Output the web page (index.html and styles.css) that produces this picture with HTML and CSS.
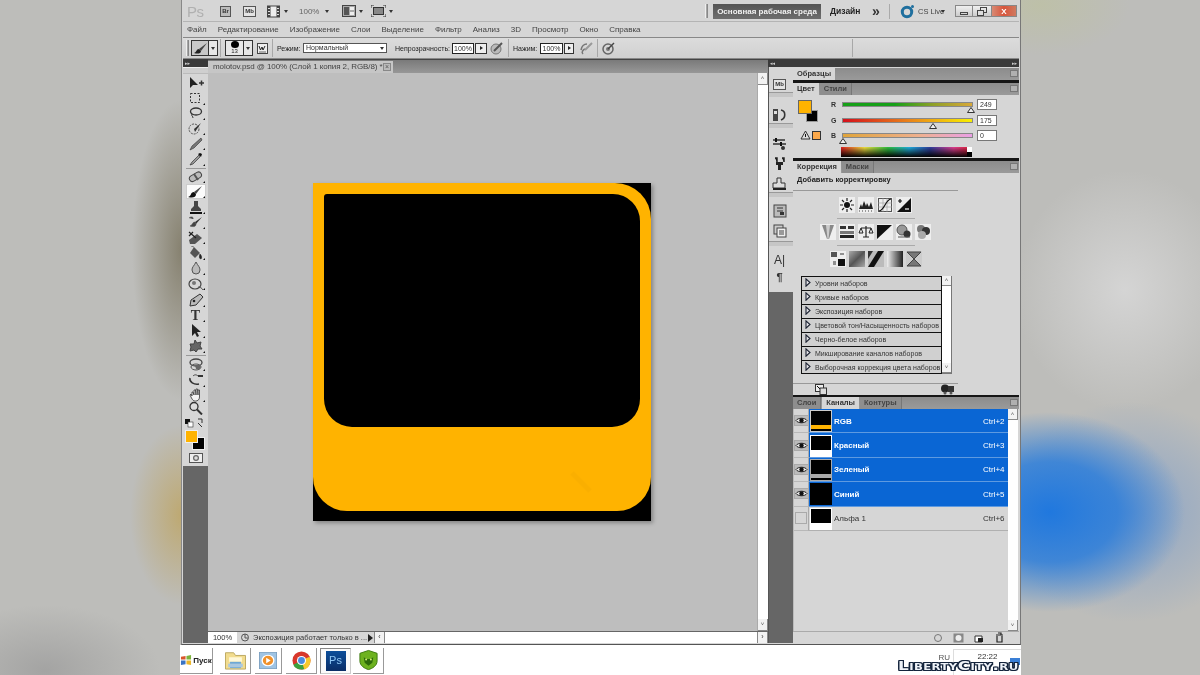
FILE: index.html
```html
<!DOCTYPE html>
<html lang="ru">
<head>
<meta charset="utf-8">
<title>molotov.psd</title>
<link rel="stylesheet" href="styles.css">
</head>
<body>
<div class="screen">
  <div class="window">
    <div class="appbar">
      <span class="ps-logo">Ps</span>
      <span class="mini br">Br</span>
      <span class="mini mb">Mb</span>
      <svg class="film" width="13" height="13" viewBox="0 0 13 13"><rect x=".5" y="1" width="12" height="11" fill="#eee" stroke="#444"/><rect x=".5" y="1" width="3" height="11" fill="#444"/><rect x="9.500" y="1" width="3" height="11" fill="#444"/><path d="M1 3.500h2M1 6.500h2M1 9.500h2M10 3.500h2M10 6.500h2M10 9.500h2" stroke="#ddd"/></svg>
      <i class="caret c-film"></i>
      <span class="zoomlabel">100%</span>
      <i class="caret c-zoom"></i>
      <svg class="arrange" width="14" height="12" viewBox="0 0 14 12"><rect x=".5" y=".5" width="13" height="11" fill="#aaa" stroke="#444"/><rect x="2" y="2" width="5" height="8" fill="#555"/><rect x="8" y="2" width="4" height="3" fill="#eee"/><rect x="8" y="7" width="4" height="3" fill="#eee"/></svg>
      <i class="caret c-arr"></i>
      <svg class="screenmode" width="15" height="12" viewBox="0 0 15 12"><rect x="2.500" y="2.500" width="10" height="7" fill="#888" stroke="#333"/><path d="M0 3V0h3M12 0h3v3M0 9v3h3M12 12h3V9" fill="none" stroke="#333"/></svg>
      <i class="caret c-scr"></i>
      <span class="grow"></span>
      <span class="grip"></span>
      <span class="ws-active">Основная рабочая среда</span>
      <span class="ws-design">Дизайн</span>
      <span class="ws-more">»</span>
      <span class="vsep"></span>
      <svg class="cs-icon" width="15" height="15" viewBox="0 0 15 15"><circle cx="7" cy="8" r="4.700" fill="none" stroke="#1f6f9e" stroke-width="3"/><circle cx="12.500" cy="2.500" r="1.500" fill="#1f6f9e"/></svg>
      <span class="cs-text">CS Live</span>
      <i class="caret c-cs"></i>
      <div class="winbtns">
        <span class="wb wb-min"><i></i></span>
        <span class="wb wb-res"><svg width="10" height="9" viewBox="0 0 10 9"><rect x="3.500" y=".5" width="6" height="5" fill="none" stroke="#444"/><rect x=".5" y="3.500" width="6" height="5" fill="#ddd" stroke="#444"/></svg></span>
        <span class="wb wb-close">X</span>
      </div>
    </div>

    <div class="menubar">
      <span>Файл</span><span>Редактирование</span><span>Изображение</span><span>Слои</span><span>Выделение</span><span>Фильтр</span><span>Анализ</span><span>3D</span><span>Просмотр</span><span>Окно</span><span>Справка</span>
    </div>

    <div class="options">
      <span class="grip opt-grip"></span>
      <span class="opt-tool">
        <span class="opt-box"><svg width="15" height="13" viewBox="0 0 15 13"><path d="M14 1 6 7l2 2z" fill="#444"/><path d="M6 7C3 7 4 10 1 11c3 1 7 1 7-2z" fill="#222"/></svg></span>
        <span class="opt-arrow"><i class="caret"></i></span>
      </span>
      <span class="vsep2 s-first"></span>
      <span class="opt-tool">
        <span class="opt-box tall"><i class="dot"></i><b>13</b></span>
        <span class="opt-arrow"><i class="caret"></i></span>
      </span>
      <span class="opt-toggle"><svg width="11" height="11" viewBox="0 0 11 11"><rect x=".5" y=".5" width="10" height="10" fill="#eee" stroke="#444"/><path d="M2 3l1.500 4L5 4l1 3 2-4" fill="none" stroke="#222"/><path d="M2 9h7" stroke="#666"/></svg></span>
      <span class="vsep2"></span>
      <span class="opt-label l-mode">Режим:</span>
      <span class="opt-select">Нормальный<i class="caret"></i></span>
      <span class="opt-label l-op">Непрозрачность:</span>
      <span class="opt-input i-op">100%</span>
      <span class="opt-step"><i class="tri-r"></i></span>
      <svg class="airbrush" width="14" height="14" viewBox="0 0 14 14"><circle cx="6" cy="8" r="5" fill="#bbb" stroke="#777"/><path d="M4 10l8-8" stroke="#555" stroke-width="2"/></svg>
      <span class="vsep2 s-press"></span>
      <span class="opt-label l-pr">Нажим:</span>
      <span class="opt-input i-pr">100%</span>
      <span class="opt-step step-pr"><i class="tri-r"></i></span>
      <svg class="airbrush2" width="13" height="13" viewBox="0 0 13 13"><path d="M1 8c1-5 4-6 6-6M3 12c-2-2 0-4 2-5" fill="none" stroke="#777" stroke-width="1.500"/><path d="M5 8l7-7" stroke="#999" stroke-width="2"/></svg>
      <span class="vsep2 s-tab"></span>
      <svg class="tablet" width="13" height="13" viewBox="0 0 13 13"><circle cx="6" cy="7" r="5" fill="none" stroke="#666" stroke-width="1.500"/><circle cx="6" cy="7" r="2" fill="#777"/><path d="M6 7l6-6" stroke="#444" stroke-width="1.500"/></svg>
      <span class="vsep2 s-end"></span>
    </div>

    <div class="workspace">
      <aside class="tools">
        <div class="dock-head left"><span>▸▸</span></div>
        <div class="tool-grip"></div>
        <div class="toolbox">
          <span class="tool"><svg viewBox="0 0 18 14"><path d="M3 1v11l3-3 5 0z" fill="#222"/><path d="M12 7h5M14.500 4.500v5" stroke="#333" stroke-width="1.500"/></svg></span>
          <span class="tool more"><svg viewBox="0 0 18 14"><rect x="3.500" y="2.500" width="9" height="9" fill="none" stroke="#333" stroke-dasharray="2 1.500"/></svg></span>
          <span class="tool more"><svg viewBox="0 0 18 14"><ellipse cx="9" cy="5.500" rx="5.500" ry="3.500" fill="none" stroke="#333" stroke-width="1.300"/><path d="M5 8c-1 2 1 2 1 4" fill="none" stroke="#333"/></svg></span>
          <span class="tool more"><svg viewBox="0 0 18 14"><circle cx="7" cy="7" r="5" fill="none" stroke="#555" stroke-dasharray="2 1"/><path d="M14 1 7 7l1 3z" fill="#333"/></svg></span>
          <span class="tool more"><svg viewBox="0 0 18 14"><path d="M14 1l-9 8-2 4 4-2 8-8z" fill="#777" stroke="#333" stroke-width=".6"/></svg></span>
          <span class="tool more"><svg viewBox="0 0 18 14"><path d="M12 3 5 10l-2 3 3-1 7-7z" fill="#999" stroke="#333" stroke-width=".7"/><path d="M11 2l3 3 1-3-2-1z" fill="#111"/></svg></span>
          <span class="tool-sep"></span>
          <span class="tool more"><svg viewBox="0 0 18 14"><rect x="2" y="5" width="13" height="6" rx="3" transform="rotate(-30 8 8)" fill="#bbb" stroke="#444"/><path d="M7 5l4 6" stroke="#555" stroke-width="2"/></svg></span>
          <span class="tool selected more"><svg viewBox="0 0 18 14"><path d="M15 1 7 7l2 2z" fill="#444"/><path d="M7 7C3 7 5 11 1 12c4 1 8 1 8-3z" fill="#111"/></svg></span>
          <span class="tool more"><svg viewBox="0 0 18 14"><path d="M7 1h4v5l3 3v2H4V9l3-3z" fill="#444"/><path d="M3 12h12v2H3z" fill="#111"/></svg></span>
          <span class="tool more"><svg viewBox="0 0 18 14"><path d="M15 2 8 7l1 2z" fill="#333"/><path d="M8 7c-3 0-2 3-5 4 3 1 6 1 6-2zM2 3c2-2 5-1 4 1" fill="#444" stroke="#444" stroke-width=".5"/></svg></span>
          <span class="tool more"><svg viewBox="0 0 18 14"><path d="M2 9l8-6 5 4-7 6H3z" fill="#555"/><path d="M2 1l7 6M6 1 2 5" stroke="#222" stroke-width="1.200"/></svg></span>
          <span class="tool more"><svg viewBox="0 0 18 14"><path d="M7 1l6 6-5 5-5-5z" fill="#555"/><path d="M13 8c2 2 2 4 1 5-2 0-2-3-1-5zM7 1 4 0" fill="#222" stroke="#222" stroke-width=".5"/></svg></span>
          <span class="tool more"><svg viewBox="0 0 18 14"><path d="M9 1c2 4 4 5 4 8a4 4 0 0 1-8 0c0-3 2-4 4-8z" fill="#bbb" stroke="#555"/></svg></span>
          <span class="tool more"><svg viewBox="0 0 18 14"><ellipse cx="8" cy="7" rx="6" ry="5" fill="none" stroke="#444" stroke-width="1.200"/><circle cx="7" cy="6" r="2" fill="#777"/><path d="M11 10c2 0 4 1 5 3" stroke="#555" fill="none"/></svg></span>
          <span class="tool more gap-t"><svg viewBox="0 0 18 14"><path d="M13 1l3 3-7 8-6 1 1-6z" fill="#bbb" stroke="#333"/><circle cx="7" cy="8" r="1.300" fill="#222"/></svg></span>
          <span class="tool more t-tool">T</span>
          <span class="tool more"><svg viewBox="0 0 18 14"><path d="M5 0v12l3-3 2 4 2-1-2-4h4z" fill="#222"/></svg></span>
          <span class="tool more"><svg viewBox="0 0 18 14"><path d="M8 1l2 3 4-1-1 4 2 3-4 0-2 3-2-2-4 1 1-4-1-3 4 0z" fill="#666" stroke="#444"/></svg></span>
          <span class="tool-sep wide"></span>
          <span class="tool more"><svg viewBox="0 0 18 14"><ellipse cx="9" cy="4.500" rx="6" ry="3.500" fill="none" stroke="#444" stroke-width="1.300"/><ellipse cx="9" cy="9" rx="5" ry="3" fill="none" stroke="#555"/><circle cx="11" cy="9" r="2.500" fill="#666"/></svg></span>
          <span class="tool more"><svg viewBox="0 0 18 14"><path d="M3 5c-1 4 4 7 9 6" fill="none" stroke="#333" stroke-width="1.500"/><path d="M11 2h5v2h-5z" fill="#333"/><path d="M6 3c2-2 4-1 5 0" fill="none" stroke="#444"/></svg></span>
          <span class="tool more"><svg viewBox="0 0 18 14"><path d="M5 8V4l1 0 1 3V2h1.500l.5 5V1h1.500l.5 6V2h1.500v7c0 3-2 4-4 4s-3-1-4-3L3 7l1-1z" fill="#f4f4f4" stroke="#333" stroke-width=".8"/></svg></span>
          <span class="tool last"><svg viewBox="0 0 18 14"><circle cx="7" cy="5.500" r="4" fill="#ddd" stroke="#333" stroke-width="1.300"/><path d="M10 8.500l5 5" stroke="#333" stroke-width="2"/></svg></span>
        </div>
        <div class="swatch-mini">
          <svg width="24" height="14" viewBox="0 0 24 14"><rect x="2" y="3" width="5" height="5" fill="#111"/><rect x="5" y="6" width="5" height="5" fill="#fff" stroke="#333" stroke-width=".6"/><path d="M15 3l4 0 0 4M15 7l4 4" fill="none" stroke="#333"/></svg>
        </div>
        <div class="colors">
          <span class="fg"></span>
          <span class="bg"></span>
        </div>
        <div class="quickmask"><svg width="14" height="10" viewBox="0 0 14 10"><rect x=".5" y=".5" width="13" height="9" fill="#eee" stroke="#555"/><circle cx="7" cy="5" r="3" fill="#666"/><circle cx="7" cy="5" r="1.800" fill="#ddd"/></svg></div>
        <div class="tools-rest"></div>
      </aside>

      <main class="doc">
        <div class="tabbar">
          <div class="doc-tab">molotov.psd @ 100% (Слой 1 копия 2, RGB/8) *<span class="tab-close">×</span></div>
        </div>
        <div class="doc-body">
          <div class="canvas">
            <div class="art">
              <div class="art-orange"><div class="art-inner"></div></div>
              <svg class="art-mark" width="26" height="24" viewBox="0 0 26 24"><path d="M3 2l18 18" stroke="#f2a800" stroke-width="5" opacity=".35"/></svg>
            </div>
          </div>
          <div class="vscroll"><span class="sb-btn">˄</span><span class="grow"></span><span class="sb-btn">˅</span></div>
        </div>
        <div class="statusbar">
          <span class="st-zoom">100%</span>
          <span class="st-icon"><svg width="10" height="9" viewBox="0 0 10 9"><circle cx="5" cy="4.500" r="3.500" fill="none" stroke="#555"/><path d="M5 1v4h3" stroke="#555" fill="none"/></svg></span>
          <span class="st-text">Экспозиция работает только в ...</span>
          <span class="st-arrow"><i class="tri-r black"></i></span>
          <span class="hb-btn">‹</span>
          <span class="grow"></span>
          <span class="hb-btn">›</span>
        </div>
      </main>

      <section class="dock">
        <div class="dock-head"><span>◂◂</span><span>▸▸</span></div>
        <div class="dock-main">
          <div class="iconcol">
            <div class="icgroup g1"><span class="mini mb dock-mb">Mb</span></div>
            <div class="icgroup g2"><svg width="15" height="14" viewBox="0 0 15 14"><rect x="1" y="1" width="5" height="12" fill="#444"/><rect x="2" y="3" width="3" height="3" fill="#ddd"/><path d="M9 2c5 1 5 8 0 10" fill="none" stroke="#333" stroke-width="1.600"/></svg></div>
            <div class="icgroup g3">
              <svg width="15" height="14" viewBox="0 0 15 14"><path d="M1 3h12M1 7h13" stroke="#333" stroke-width="1.500"/><path d="M4 1v4M9 5v4" stroke="#111" stroke-width="2"/><circle cx="11" cy="11" r="2" fill="#333"/></svg>
              <svg width="15" height="14" viewBox="0 0 15 14"><path d="M4 5h7v3H9v5H6V8H4z" fill="#222"/><path d="M3 1h2v4M10 1h2v4" stroke="#222" stroke-width="1.500"/></svg>
              <svg width="15" height="14" viewBox="0 0 15 14"><path d="M5 1h4v5h4v5H1V6h4z" fill="#ddd" stroke="#333"/><path d="M1 12h13" stroke="#222" stroke-width="2"/></svg>
            </div>
            <div class="icgroup g4">
              <svg width="14" height="14" viewBox="0 0 14 14"><rect x="1" y="1" width="12" height="12" fill="#bbb" stroke="#444"/><path d="M4 4h6M4 7h6" stroke="#333"/><rect x="7" y="8" width="4" height="3" fill="#333"/></svg>
              <svg width="14" height="14" viewBox="0 0 14 14"><rect x="1" y="1" width="9" height="9" fill="#ccc" stroke="#444"/><rect x="4" y="4" width="9" height="9" fill="#eee" stroke="#444"/><rect x="6" y="6" width="5" height="5" fill="#999"/></svg>
            </div>
            <div class="icgroup g5">
              <span class="glyph-a">A|</span>
              <span class="glyph-p">¶</span>
            </div>
            <div class="icrest"></div>
          </div>

          <div class="panels">
            <div class="panel-head first">
              <span class="ptab on">Образцы</span>
              <span class="pmenu"></span>
            </div>
            <div class="blackline"></div>
            <div class="panel-head">
              <span class="ptab on">Цвет</span><span class="ptab">Стили</span>
              <span class="pmenu"></span>
            </div>
            <div class="color-panel">
              <div class="color-left">
                <div class="swatches"><span class="sw-fg"></span><span class="sw-bg"></span></div>
                <div class="gamut">
                  <svg width="11" height="10" viewBox="0 0 11 10"><path d="M5.500 1 10 9H1z" fill="#ddd" stroke="#333"/><path d="M5.500 4v3" stroke="#111"/></svg>
                  <span class="gamut-sw"></span>
                </div>
              </div>
              <div class="color-right">
                <div class="cslider"><label>R</label><div class="track t-r"><svg class="thumb" style="left:124px" width="8" height="6" viewBox="0 0 8 6"><path d="M4 .5 7.500 5.500H.5z" fill="#eee" stroke="#333"/></svg></div><span class="cinput">249</span></div>
                <div class="cslider"><label>G</label><div class="track t-g"><svg class="thumb" style="left:86px" width="8" height="6" viewBox="0 0 8 6"><path d="M4 .5 7.500 5.500H.5z" fill="#eee" stroke="#333"/></svg></div><span class="cinput">175</span></div>
                <div class="cslider"><label>B</label><div class="track t-b"><svg class="thumb" style="left:-4px" width="8" height="6" viewBox="0 0 8 6"><path d="M4 .5 7.500 5.500H.5z" fill="#eee" stroke="#333"/></svg></div><span class="cinput">0</span></div>
                <div class="spectrum"><span class="spec-bw"></span></div>
              </div>
            </div>
            <div class="blackline"></div>
            <div class="panel-head">
              <span class="ptab on">Коррекция</span><span class="ptab">Маски</span>
              <span class="pmenu"></span>
            </div>
            <div class="adj-panel">
              <div class="adj-title">Добавить корректировку</div>
              <div class="adj-icons">
                <div class="adj-row">
                  <span class="adj"><svg viewBox="0 0 16 16"><circle cx="8" cy="8" r="3" fill="#111"/><path d="M8 1v3M8 12v3M1 8h3M12 8h3M3 3l2 2M11 11l2 2M13 3l-2 2M3 13l2-2" stroke="#222" stroke-width="1.200"/></svg></span>
                  <span class="adj"><svg viewBox="0 0 16 16"><path d="M1 12 3 7l1 3 2-6 2 5 1-3 2 4 2-5 2 7z" fill="#222"/><path d="M1 14h14" stroke="#444" stroke-dasharray="1 2"/></svg></span>
                  <span class="adj"><svg viewBox="0 0 16 16"><rect x="1.500" y="1.500" width="13" height="13" fill="none" stroke="#555"/><path d="M1 6h14M1 10h14M6 1v14M10 1v14" stroke="#999" stroke-width=".6"/><path d="M2 14C8 13 8 3 14 2" fill="none" stroke="#111" stroke-width="1.200"/></svg></span>
                  <span class="adj"><svg viewBox="0 0 16 16"><path d="M1 15 15 1v14z" fill="#111"/><path d="M2 4h4M4 2v4" stroke="#111" stroke-width="1.200"/><path d="M9 12h4" stroke="#fff" stroke-width="1.200"/></svg></span>
                </div>
                <div class="adj-line"></div>
                <div class="adj-row">
                  <span class="adj"><svg viewBox="0 0 16 16"><path d="M2 1h12L9 15H7z" fill="#888"/><path d="M6 1h4L8.500 15h-1z" fill="#ccc"/></svg></span>
                  <span class="adj"><svg viewBox="0 0 16 16"><path d="M1 2h6v3H1zM9 2h6v3H9z" fill="#333"/><rect x="1" y="7" width="14" height="3" fill="#777"/><rect x="1" y="11" width="14" height="3" fill="#222"/></svg></span>
                  <span class="adj"><svg viewBox="0 0 16 16"><path d="M8 2v11M3 4h10M5 13h6" stroke="#222" stroke-width="1.200"/><path d="M3 4 1 9h4zM13 4l-2 5h4z" fill="none" stroke="#222"/></svg></span>
                  <span class="adj"><svg viewBox="0 0 16 16"><path d="M0 15 15 1H0z" fill="#111"/></svg></span>
                  <span class="adj"><svg viewBox="0 0 16 16"><circle cx="6" cy="6" r="5" fill="#999" stroke="#555"/><circle cx="11" cy="10" r="3.500" fill="#333"/><path d="M2 13h12" stroke="#555"/></svg></span>
                  <span class="adj"><svg viewBox="0 0 16 16"><circle cx="6" cy="5" r="4" fill="#777"/><circle cx="11" cy="7" r="4" fill="#333"/><circle cx="7" cy="11" r="4" fill="#aaa"/></svg></span>
                </div>
                <div class="adj-line"></div>
                <div class="adj-row">
                  <span class="adj"><svg viewBox="0 0 16 16"><rect x="1" y="1" width="6" height="5" fill="#555"/><rect x="8" y="8" width="7" height="7" fill="#111"/><path d="M3 11h3M3 13h3" stroke="#333"/><path d="M10 3h4" stroke="#333"/></svg></span>
                  <span class="adj grad1"></span>
                  <span class="adj grad2"><svg viewBox="0 0 16 16"><path d="M0 16 10 0h6L6 16z" fill="#111"/><path d="M0 8 5 0H0z" fill="#333"/></svg></span>
                  <span class="adj grad3"></span>
                  <span class="adj"><svg viewBox="0 0 16 16"><rect width="16" height="16" fill="#ccc"/><path d="M1 1h14L1 15h14z" fill="#777" stroke="#444"/></svg></span>
                </div>
              </div>
              <div class="preset-wrap">
                <div class="preset-list">
                  <div class="preset"><svg class="tri-o" width="6" height="9" viewBox="0 0 6 9"><use href="#tri-shape"/></svg>Уровни наборов</div>
                  <div class="preset"><svg class="tri-o" width="6" height="9" viewBox="0 0 6 9"><use href="#tri-shape"/></svg>Кривые наборов</div>
                  <div class="preset"><svg class="tri-o" width="6" height="9" viewBox="0 0 6 9"><use href="#tri-shape"/></svg>Экспозиция наборов</div>
                  <div class="preset"><svg class="tri-o" width="6" height="9" viewBox="0 0 6 9"><use href="#tri-shape"/></svg>Цветовой тон/Насыщенность наборов</div>
                  <div class="preset"><svg class="tri-o" width="6" height="9" viewBox="0 0 6 9"><use href="#tri-shape"/></svg>Черно-белое наборов</div>
                  <div class="preset"><svg class="tri-o" width="6" height="9" viewBox="0 0 6 9"><use href="#tri-shape"/></svg>Микширование каналов наборов</div>
                  <div class="preset"><svg class="tri-o" width="6" height="9" viewBox="0 0 6 9"><use href="#tri-shape"/></svg>Выборочная коррекция цвета наборов</div>
                </div>
                <div class="preset-scroll"><span class="sb-btn">˄</span><span class="grow"></span><span class="sb-btn">˅</span></div>
              </div>
              <div class="adj-foot">
                <svg width="12" height="11" viewBox="0 0 12 11"><rect x=".5" y=".5" width="8" height="7" fill="#eee" stroke="#333"/><rect x="5" y="4" width="6.500" height="6.500" fill="#ddd" stroke="#333"/><path d="M2 2l3 3" stroke="#111"/></svg>
                <svg width="14" height="11" viewBox="0 0 14 11"><circle cx="4" cy="4.500" r="4" fill="#222"/><rect x="7" y="2" width="6" height="6" fill="#333"/><circle cx="4" cy="9" r="1.500" fill="#555"/><circle cx="10" cy="9" r="1.500" fill="#555"/></svg>
              </div>
            </div>
            <div class="blackline thin"></div>
            <div class="panel-head">
              <span class="ptab">Слои</span><span class="ptab on">Каналы</span><span class="ptab">Контуры</span>
              <span class="pmenu"></span>
            </div>
            <div class="channels">
              <div class="ch-list">
                <div class="channel sel"><span class="eye"><svg width="13" height="9" viewBox="0 0 13 9"><use href="#eye-shape"/></svg></span><span class="thumb-ch th-rgb"></span><b>RGB</b><em>Ctrl+2</em></div>
                <div class="channel sel"><span class="eye"><svg width="13" height="9" viewBox="0 0 13 9"><use href="#eye-shape"/></svg></span><span class="thumb-ch th-red"></span><b>Красный</b><em>Ctrl+3</em></div>
                <div class="channel sel"><span class="eye"><svg width="13" height="9" viewBox="0 0 13 9"><use href="#eye-shape"/></svg></span><span class="thumb-ch th-green"></span><b>Зеленый</b><em>Ctrl+4</em></div>
                <div class="channel sel"><span class="eye"><svg width="13" height="9" viewBox="0 0 13 9"><use href="#eye-shape"/></svg></span><span class="thumb-ch th-blue"></span><b>Синий</b><em>Ctrl+5</em></div>
                <div class="channel"><span class="eye empty"></span><span class="thumb-ch th-red"></span><span class="ch-name">Альфа 1</span><em>Ctrl+6</em></div>
              </div>
              <div class="ch-scroll"><span class="sb-btn">˄</span><span class="grow"></span><span class="sb-btn">˅</span></div>
            </div>
            <div class="ch-foot">
              <svg width="10" height="10" viewBox="0 0 10 10"><circle cx="5" cy="5" r="3.500" fill="none" stroke="#777"/></svg>
              <svg width="11" height="10" viewBox="0 0 11 10"><rect x=".5" y=".5" width="10" height="9" fill="#888"/><circle cx="5.500" cy="5" r="3" fill="#eee"/></svg>
              <svg width="11" height="10" viewBox="0 0 11 10"><path d="M1 3h7v6H1z" fill="#fff" stroke="#333"/><rect x="4" y="5" width="5" height="4" fill="#222"/></svg>
              <svg width="9" height="11" viewBox="0 0 9 11"><path d="M1 3h7M3 1h3v2M2 4v6h5V4" fill="none" stroke="#222" stroke-width="1.200"/></svg>
            </div>
          </div>
        </div>
      </section>
    </div>
  </div>

  <footer class="taskbar">
    <span class="tb start"><svg width="12" height="11" viewBox="0 0 13 12"><path d="M1 2l5-1v4H1z" fill="#d9552b"/><path d="M7 1l5-1v5H7z" fill="#7db33b"/><path d="M1 6h5v4l-5 1z" fill="#3a74c4"/><path d="M7 6h5v5l-5-1z" fill="#ecb72b"/></svg><b>Пуск</b></span>
    <span class="tb b-folder"><svg width="23" height="20" viewBox="0 0 24 22"><path d="M1 3h9l2 3h11v15H1z" fill="#f2dc8e" stroke="#b9a45a"/><rect x="5" y="8" width="14" height="5" fill="#fff8d8"/><rect x="6" y="13" width="12" height="7" fill="#6ea8d4"/><rect x="4" y="15" width="16" height="4" fill="#aac8e0"/></svg></span>
    <span class="tb b-media"><svg width="18" height="17" viewBox="0 0 20 21" preserveAspectRatio="none"><rect x=".5" y=".5" width="19" height="20" fill="#9fc4e4" stroke="#7b9fc0"/><circle cx="10" cy="10.500" r="6.500" fill="#f0912a" stroke="#fff" stroke-width="1.500"/><path d="M8 7l5 3.500L8 14z" fill="#fff"/></svg></span>
    <span class="tb b-chrome"><svg width="19" height="19" viewBox="0 0 20 20"><circle cx="10" cy="10" r="9.500" fill="#d8382c"/><path d="M10 10 1.400 14.500C3 18 6 19.500 10 19.500c1 0 2-.1 3-.5z" fill="#3ba23f"/><path d="M10 10l3 9.500c4-1.500 6.500-5 6.500-9.500 0-1.500-.3-3-1-4z" fill="#f7c92f"/><circle cx="10" cy="10" r="4.800" fill="#fff"/><circle cx="10" cy="10" r="3.600" fill="#4c8ce0"/></svg></span>
    <span class="tb b-ps pressed"><span class="ps-app">Ps</span></span>
    <span class="tb b-web"><svg width="21" height="22" viewBox="0 0 22 22"><path d="M11 1l9 3v8c0 5-5 8-9 9-4-1-9-4-9-9V4z" fill="#6db21f" stroke="#3d7a10"/><path d="M6 8l3 2h4l3-2-1 6-4 3-4-3z" fill="#2d6a0a"/><circle cx="8.500" cy="10.500" r="1" fill="#d8f07a"/><circle cx="13.500" cy="10.500" r="1" fill="#d8f07a"/></svg></span>
    <span class="grow"></span>
    <span class="lang">RU</span>
    <span class="tray"><span class="clock">22:22</span></span>
    <span class="wm-flag"></span>
    <span class="watermark">LibertyCity.ru</span>
  </footer>
</div>

<svg class="defs" width="0" height="0" aria-hidden="true"><defs>
  <g id="eye-shape"><path d="M1 4.500C3 1.500 10 1.500 12 4.500 10 7.500 3 7.500 1 4.500z" fill="#eee" stroke="#222"/><circle cx="6.500" cy="4.500" r="2.200" fill="#111"/></g>
  <path id="tri-shape" d="M1 .8 5 4.500 1 8.200z" fill="#e4e4e8" stroke="#1a2030" stroke-width="1.100"/>
</defs></svg>
</body>
</html>
```
FILE: styles.css
```css
* { box-sizing: border-box; }
html, body { margin: 0; height: 675px; overflow: hidden; }
body {
  width: 1200px;
  font-family: "Liberation Sans", "DejaVu Sans", sans-serif;
  font-size: 8px;
  color: #333;
  background:
    radial-gradient(ellipse 135px 100px at 1050px 512px, rgba(32,120,222,1) 0%, rgba(36,122,220,.8) 50%, rgba(60,130,210,0) 100%),
    radial-gradient(ellipse 130px 110px at 1130px 512px, rgba(110,150,205,.65) 0%, rgba(110,150,205,0) 100%),
    radial-gradient(ellipse 50px 150px at 182px 250px, rgba(115,108,85,.75) 0%, rgba(115,108,85,0) 100%),
    radial-gradient(ellipse 52px 90px at 182px 515px, rgba(190,165,100,.85) 0%, rgba(190,165,100,0) 100%),
    radial-gradient(ellipse 115px 65px at 45px 670px, rgba(150,150,150,.65) 0%, rgba(150,150,150,0) 100%),
    radial-gradient(ellipse 90px 50px at 1040px 5px, rgba(190,195,150,.5) 0%, rgba(190,195,150,0) 100%),
    radial-gradient(ellipse 110px 120px at 1125px 290px, rgba(215,215,215,.9) 0%, rgba(215,215,215,0) 100%),
    #bdbdba;
}
.defs { display: block; height: 0; }
.grow { flex: 1; }
i { display: block; font-style: normal; }

.screen {
  width: 840px;
  height: 675px;
  margin-left: 181px;
  display: flex;
  flex-direction: column;
  filter: blur(.35px);
}
.window {
  height: 645px;
  padding: 1px 1px 1px 1px;
  background: #d6d6d6;
  border-left: 1px solid #888;
  border-right: 1px solid #777;
  border-bottom: 1px solid #555;
  display: flex;
  flex-direction: column;
}

/* application bar */
.appbar {
  height: 21px;
  flex: none;
  display: flex;
  align-items: center;
  position: relative;
  padding-left: 4px;
  border-bottom: 1px solid #b4b4b4;
}
.ps-logo { width: 15px; font-size: 15px; color: #b0b0b0; line-height: 1; margin-right: 18px; letter-spacing: -.5px; }
.mini {
  width: 11px; height: 11px;
  border: 1px solid #555;
  background: #bdbdbd;
  font-size: 6px; line-height: 9px; font-weight: 700;
  text-align: center; color: #333;
  margin-right: 12px;
}
.mini.mb { width: 13px; background: #e4e4e4; }
.film { margin-left: -1px; }
.caret { width: 0; height: 0; border: 2.500px solid transparent; border-top: 3px solid #333; border-bottom: 0; flex: none; }
.c-film { margin: 0 11px 0 4px; }
.zoomlabel { color: #666; width: 22px; font-size: 8px; }
.c-zoom { margin: 0 13px 0 4px; }
.c-arr { margin: 0 8px 0 3px; }
.c-scr { margin-left: 3px; }
.grip { width: 3px; height: 14px; background: #a6a6a6; border-left: 1px solid #eee; border-right: 1px solid #888; flex: none; }
.ws-active {
  margin-left: 5px;
  width: 108px; height: 15px;
  background: linear-gradient(#555, #6e6e6e);
  color: #f2f2f2; font-weight: 700; font-size: 8px;
  line-height: 15px; text-align: center;
}
.ws-design { margin-left: 9px; width: 35px; font-weight: 700; color: #222; font-size: 8.500px; }
.ws-more { width: 12px; font-size: 14px; line-height: 14px; font-weight: 700; color: #333; margin-left: 7px; }
.vsep { width: 1px; height: 15px; background: #aaa; margin: 0 10px 0 5px; }
.cs-icon { margin-right: 3px; }
.cs-text { width: 23px; font-size: 7.500px; color: #444; white-space: nowrap; }
.c-cs { margin-right: 10px; }
.winbtns { display: flex; height: 12px; margin-right: 2px; border: 1px solid #888; }
.wb { display: flex; align-items: center; justify-content: center; height: 100%; }
.wb-min { width: 17px; background: linear-gradient(#f0f0f0, #ccc); border-right: 1px solid #888; }
.wb-min i { width: 8px; height: 3px; border: 1px solid #444; margin-top: 4px; }
.wb-res { width: 19px; background: linear-gradient(#f0f0f0, #ccc); border-right: 1px solid #888; }
.wb-close { width: 24px; background: linear-gradient(90deg, #d88a74, #d8553c 50%, #cf7a60); color: #fff; font-weight: 700; font-size: 8px; }

/* menu */
.menubar {
  height: 15px;
  flex: none;
  display: flex;
  gap: 11px;
  align-items: center;
  padding-left: 4px;
  color: #444;
  font-size: 8px;
}
.menubar span { white-space: nowrap; }

/* options */
.options {
  height: 22px;
  flex: none;
  display: flex;
  align-items: center;
  border: 1px solid #888;
  border-width: 1px 0;
  background: linear-gradient(#dcdcdc, #d0d0d0);
  padding-left: 3px;
  position: relative;
}
.opt-grip { height: 16px; margin-right: 2px; width: 3px; }
.opt-tool { display: flex; height: 16px; border: 1px solid #333; background: #e6e6e6; flex: none; }
.opt-box { width: 17px; border-right: 1px solid #333; display: flex; align-items: center; justify-content: center; background: #c8c8c8; }
.opt-box.tall { width: 18px; flex-direction: column; background: #e8e8e8; }
.opt-box .dot { width: 8px; height: 8px; border-radius: 50%; background: #000; }
.opt-box b { font-size: 6px; line-height: 7px; color: #222; font-weight: 400; }
.opt-arrow { width: 8px; display: flex; align-items: center; justify-content: center; }
.vsep2 { width: 1px; height: 18px; background: #a8a8a8; margin: 0 4px; flex: none; }
.s-first { margin: 0 4px 0 2px; }
.opt-toggle { margin: 0 0 0 4px; height: 11px; display: block; line-height: 0; }
.opt-label { font-size: 7px; color: #222; white-space: nowrap; }
.l-mode { width: 23px; }
.opt-select {
  margin-left: 3px; width: 84px; height: 10px; background: #fff;
  border: 1px solid #555; font-size: 7px; line-height: 8px; padding-left: 2px;
  position: relative;
}
.opt-select .caret { position: absolute; right: 2px; top: 3px; border-bottom: 0; }
.l-op { margin: 0 4px 0 8px; width: 53px; }
.opt-input { width: 22px; height: 11px; background: #fff; border: 1px solid #222; font-size: 7px; line-height: 9px; text-align: center; }
.opt-step { width: 12px; height: 11px; margin-left: 1px; border: 1px solid #333; background: #eee; display: flex; align-items: center; justify-content: center; }
.tri-r { width: 0; height: 0; border: 2.500px solid transparent; border-left: 3px solid #222; border-right: 0; }
.airbrush { margin-left: 3px; }
.s-press { margin: 0 4px 0 4px; }
.l-pr { width: 27px; }
.i-pr { width: 23px; }
.step-pr { width: 10px; }
.airbrush2 { margin-left: 6px; }
.s-tab { margin: 0 4px; }
.s-end { margin: 0 0 0 237px; }

/* workspace */
.workspace { flex: 1; display: flex; min-height: 0; }
.dock-head {
  height: 8px; flex: none;
  background: #3a3a3a; color: #ccc; font-size: 5px; line-height: 8px;
  display: flex; justify-content: space-between; padding: 0 2px;
}
.tools { width: 25px; flex: none; display: flex; flex-direction: column; background: #666; }
.tool-grip { height: 7px; background: #cfcfcf; flex: none; border-bottom: 1px solid #bbb; border-top: 1px solid #eee; }
.toolbox { background: #d6d6d6; padding-top: 1px; display: flex; flex-direction: column; align-items: center; flex: none; }
.tool { width: 20px; height: 15.300px; display: flex; align-items: center; justify-content: center; position: relative; flex: none; }
.tool svg { width: 18px; height: 14px; display: block; }
.tool.more::after { content: ""; position: absolute; right: 1px; bottom: 1px; border: 1px solid #111; border-color: transparent #111 #111 transparent; }
.tool.selected { background: #fbfbfb; box-shadow: inset 0 0 0 1px #ccc; }
.tool.last { margin-top: -2.500px; }
.tool-sep { width: 20px; height: 1px; background: #999; margin: 1px 0 0; flex: none; }
.tool-sep.wide { margin: 1px 0 1px; }
.t-tool { font-family: "Liberation Serif", serif; font-size: 14px; font-weight: 700; color: #333; }
.gap-t { margin-top: 1.700px; }
.swatch-mini { height: 14px; background: #d6d6d6; flex: none; line-height: 0; }
.swatch-mini svg { display: block; }
.colors { height: 20px; background: #d6d6d6; position: relative; flex: none; }
.colors .fg { position: absolute; left: 2px; top: 0; width: 13px; height: 13px; background: #ffb300; border: 1px solid #eee; z-index: 1; }
.colors .bg { position: absolute; left: 9px; top: 7px; width: 13px; height: 13px; background: #000; border: 1px solid #eee; }
.quickmask { height: 16px; background: #d6d6d6; flex: none; display: flex; justify-content: center; align-items: flex-start; padding-top: 3px; }
.tools-rest { flex: 1; background: #666; }

/* document */
.doc { flex: 1; min-width: 0; display: flex; flex-direction: column; }
.tabbar { height: 14px; flex: none; background: linear-gradient(#7a7a7a, #979797); display: flex; align-items: flex-end; border-top: 1px solid #444; }
.doc-tab {
  width: 185px; height: 12px; margin-left: 0;
  background: #c6c6c6; color: #444;
  font-size: 8px; line-height: 12px; white-space: nowrap; letter-spacing: -.08px;
  padding-left: 5px; position: relative;
}
.tab-close { position: absolute; right: 2px; top: 2px; width: 8px; height: 8px; border: 1px solid #888; background: #bbb; font-size: 7px; line-height: 6px; text-align: center; color: #555; }
.doc-body { flex: 1; display: flex; min-height: 0; }
.canvas { flex: 1; background: #bebebe; padding: 110px 0 0 105px; }
.art { width: 338px; height: 338px; background: #000; position: relative; box-shadow: 2px 2px 4px rgba(0,0,0,.3); }
.art-orange { height: 328px; background: #ffb300; border-radius: 0 36px 34px 34px; padding: 11px; }
.art-inner { width: 316px; height: 233px; background: #000; border-radius: 3px 27px 28px 28px; }
.art-mark { position: absolute; left: 256px; top: 288px; }
.vscroll, .ch-scroll, .preset-scroll { background: #fff; display: flex; flex-direction: column; flex: none; }
.vscroll { width: 11px; border-left: 1px solid #aaa; }
.sb-btn {
  height: 12px; background: #f2f2f2; border: 1px solid #888; border-width: 0 1px 1px 0;
  font-size: 6px; line-height: 10px; text-align: center; color: #555; flex: none;
}
.statusbar { height: 12px; flex: none; display: flex; align-items: stretch; background: #d6d6d6; border-top: 1px solid #666; font-size: 7.500px; }
.st-zoom { width: 29px; background: #fff; text-align: center; line-height: 11px; color: #333; }
.st-icon { width: 16px; display: flex; align-items: center; justify-content: center; }
.st-text { width: 113px; line-height: 11px; white-space: nowrap; color: #333; }
.st-arrow { width: 8px; display: flex; align-items: center; justify-content: center; }
.tri-r.black { border-width: 4px 0 4px 5px; }
.hb-btn { width: 11px; background: #f2f2f2; border: 1px solid #888; border-width: 0 1px 0 1px; text-align: center; line-height: 9px; font-size: 7px; }
.statusbar .grow { background: #fff; }

/* dock */
.dock { width: 251px; flex: none; display: flex; flex-direction: column; }
.dock-main { flex: 1; display: flex; min-height: 0; }
.iconcol { width: 25px; flex: none; display: flex; flex-direction: column; border-left: 1px solid #555; background: #666; }
.icgroup { background: #d6d6d6; display: flex; flex-direction: column; align-items: center; flex: none; padding-right: 3px; gap: 6px; border-bottom: 1px solid #999; border-top: 4px solid #c6c6c6; }
.g1 { height: 26px; padding-top: 12px; border-top: 0; }
.g1 .mini { margin: 0; }
.g2 { height: 31px; padding-top: 11px; }
.g3 { height: 69px; padding-top: 9px; }
.g4 { height: 49px; padding-top: 7px; }
.g5 { height: 50px; padding-top: 7px; gap: 4px; border-bottom: 0; }
.glyph-a { font-size: 12px; line-height: 14px; color: #333; }
.glyph-p { font-size: 11px; line-height: 13px; font-weight: 700; color: #333; }
.icrest { flex: 1; background: #666; }

.panels { flex: 1; min-width: 0; display: flex; flex-direction: column; background: #d6d6d6; }
.panel-head {
  height: 12px; flex: none;
  background: linear-gradient(#8c8c8c, #9a9a9a);
  display: flex; position: relative; gap: 1px;
}
.panel-head.first { margin-top: 1px; }
.ptab { padding: 0 4px; font-size: 7.500px; line-height: 12px; font-weight: 700; color: #444; background: #8e8e8e; white-space: nowrap; border-right: 1px solid #777; }
.ptab.on { background: #d6d6d6; color: #333; border-right: 0; padding: 0 4px; }
.pmenu { position: absolute; right: 1px; top: 2px; width: 8px; height: 7px; background: #b0b0b0; border: 1px solid #777; }
.blackline { height: 3px; flex: none; background: #161616; }
.blackline.thin { height: 2px; }

.color-panel { height: 63px; flex: none; display: flex; }
.color-left { width: 42px; flex: none; padding: 5px 0 0 5px; }
.swatches { position: relative; height: 27px; }
.sw-fg { position: absolute; left: 0; top: 0; width: 14px; height: 14px; background: #ffb300; border: 1px solid #666; z-index: 1; }
.sw-bg { position: absolute; left: 8px; top: 10px; width: 12px; height: 12px; background: #000; border: 1px solid #999; }
.gamut { display: flex; gap: 1px; align-items: center; margin-top: 3px; padding-left: 2px; }
.gamut-sw { width: 9px; height: 9px; background: #fba84a; border: 1px solid #333; }
.color-right { flex: 1; padding-top: 2px; }
.cslider { display: flex; align-items: center; height: 15.500px; position: relative; }
.cslider label { position: absolute; left: -4px; top: 3px; font-size: 7px; font-weight: 700; line-height: 9px; color: #333; }
.track { width: 131px; height: 5px; margin-left: 7px; position: relative; border: 1px solid #888; }
.t-r { background: linear-gradient(90deg, #16a018 40%, #8fa028 70%, #d8a838); }
.t-g { background: linear-gradient(90deg, #d4101c, #e8801a 50%, #f8f000); }
.t-b { background: linear-gradient(90deg, #e0a43a, #eeb090 60%, #eaa0e6); }
.thumb { position: absolute; top: 4px; }
.cinput { width: 20px; height: 11px; margin-left: 4px; background: #fff; border: 1px solid #777; font-size: 7px; line-height: 9px; padding-left: 2px; }
.spectrum {
  width: 131px; height: 10px; margin: 3px 0 0 6px; position: relative;
  background:
    linear-gradient(#fff0, #000),
    linear-gradient(90deg, #e02020, #f0e040 18%, #30c040 36%, #20b0e0 52%, #3040a0 68%, #e04090 86%, #e02030);
}
.spec-bw { position: absolute; right: 0; top: 0; width: 5px; height: 10px; background: linear-gradient(#fff 50%, #000 50%); }

.adj-panel { height: 222px; flex: none; display: flex; flex-direction: column; }
.adj-title { font-size: 7.500px; font-weight: 700; color: #222; height: 18px; padding: 2px 0 0 4px; width: 165px; line-height: 10px; border-bottom: 1px solid #999; }
.adj-icons { width: 165px; display: flex; flex-direction: column; align-items: center; padding-top: 6px; height: 78px; flex: none; }
.adj-row { display: flex; gap: 3px; height: 16px; flex: none; }
.adj { width: 16px; height: 16px; background: #eee; display: block; line-height: 0; }
.adj svg { display: block; width: 16px; height: 16px; }
.adj-line { width: 78px; height: 1px; background: #aaa; margin: 5px 0 5px; flex: none; }
.grad1 { background: linear-gradient(135deg, #aaa, #555 50%, #aaa); }
.grad2 { background: #bbb; }
.grad3 { background: linear-gradient(90deg, #eee, #222); }
.preset-wrap { display: flex; margin: 7px 0 0 8px; height: 98px; flex: none; }
.preset-list { width: 141px; border: 1px solid #111; background: #d0d0d0; display: flex; flex-direction: column; }
.preset { flex: 1; border-bottom: 1px solid #111; font-size: 7px; line-height: 13px; color: #333; display: flex; align-items: center; white-space: nowrap; padding-left: 3px; }
.preset:last-child { border-bottom: 0; }
.tri-o { flex: none; margin: -2px 4px 0 0; }
.preset-scroll { width: 10px; border-right: 1px solid #777; border-bottom: 1px solid #777; }
.preset-scroll .sb-btn { height: 10px; border-right: 0; font-size: 6px; line-height: 8px; }
.adj-foot { width: 165px; margin-top: 9px; height: 12px; border-top: 1px solid #999; display: flex; justify-content: space-between; padding: 0 3px 0 22px; }

.channels { flex: none; height: 222px; display: flex; }
.ch-list { width: 215px; background: #d6d6d6; border-left: 1px solid #bbb; }
.channel { height: 24.400px; display: flex; align-items: center; position: relative; }
.channel::after { content: ""; position: absolute; left: 15px; right: 0; bottom: 0; height: 1px; background: #b0b0b0; }
.channel.sel { background: #0a66d4; color: #fff; }
.channel.sel::after { background: #5e9ae0; }
.eye { width: 15px; height: 100%; background: #d6d6d6; display: flex; align-items: center; justify-content: center; flex: none; border-right: 1px solid #aaa; border-bottom: 1px solid #b8b8b8; }
.eye svg { background: #bbb; box-shadow: 0 0 0 1px #aaa; }
.eye.empty::after { content: ""; width: 10px; height: 10px; border: 1px solid #aaa; }
.thumb-ch { width: 22px; height: 22px; margin: 0 2px 0 1px; flex: none; border: 1px solid #ccc; }
.th-rgb { background: linear-gradient(#000 70%, #ffb300 70%, #ffb300 90%, #000 90%); }
.th-red { background: linear-gradient(#000 68%, #fff 68%); border-color: #fff; }
.th-green { background: linear-gradient(#000 68%, #aaa 68%, #aaa 90%, #000 90%); border-color: #aaa; }
.th-blue { background: #000; border-color: #000; }
.channel b { font-size: 8px; font-weight: 700; color: #fff; }
.ch-name { font-size: 8px; color: #333; }
.channel em { position: absolute; left: 189px; font-style: normal; font-size: 8px; }
.ch-scroll { width: 10px; }
.ch-scroll .sb-btn { height: 11px; }
.ch-foot { flex: 1; display: flex; justify-content: flex-end; align-items: center; gap: 10px; padding-right: 15px; border-top: 1px solid #aaa; }

/* taskbar */
.taskbar { height: 30px; flex: none; background: #fff; display: flex; align-items: center; margin-left: -1px; width: 841px; position: relative; }
.tb { height: 26px; margin-top: 1px; display: flex; align-items: center; justify-content: center; border-right: 1px solid #999; border-bottom: 1px solid #999; flex: none; }
.start { width: 33px; gap: 1px; margin-right: 7px; }
.start b { font-size: 8px; color: #222; }
.b-folder { width: 31px; margin-right: 4px; }
.b-media { width: 27px; margin-right: 4px; }
.b-chrome { width: 31px; margin-right: 3px; }
.b-ps { width: 31px; margin-right: 2px; }
.pressed { border: 1px solid #888; border-right-color: #ccc; border-bottom-color: #ccc; background: #fafafa; }
.ps-app { width: 20px; height: 20px; background: linear-gradient(#0c4e9a, #0a2d66); color: #8ec6f4; font-size: 11px; line-height: 19px; text-align: center; }
.b-web { width: 31px; }
.lang { font-size: 8px; line-height: 6px; color: #555; margin: 0 3px 5px 0; }
.tray { width: 68px; height: 26px; align-self: flex-end; border: 1px solid #ddd; border-width: 1px 0 0 1px; text-align: center; padding: 4px 0 0 0; }
.clock { display: block; font-size: 8px; line-height: 6px; color: #333; }
.watermark {
  position: absolute; left: 718px; top: 16px;
  font-family: "DejaVu Sans", sans-serif;
  font-size: 13px; font-weight: 700; line-height: 9px;
  font-variant: small-caps;
  letter-spacing: .3px;
  color: #eef2f8;
  text-shadow: 1px 0 #14243c, -1px 0 #14243c, 0 1px #14243c, 0 -1px #14243c, 1px 1px #14243c, -1px -1px #14243c, 1px -1px #14243c, -1px 1px #14243c;
  white-space: nowrap;
  transform: scaleX(1.3);
  transform-origin: left center;
}
.wm-flag { position: absolute; left: 830px; top: 13px; width: 10px; height: 7px; background: #3a7fd6; }
```
